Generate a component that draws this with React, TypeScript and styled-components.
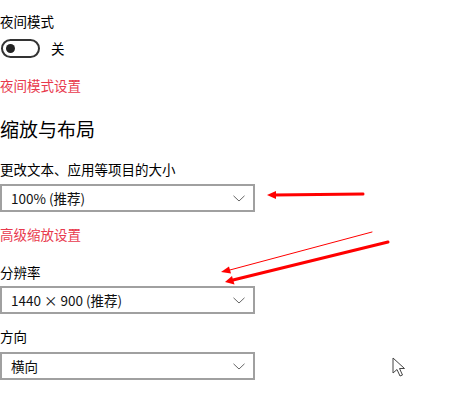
import styled, { createGlobalStyle } from "styled-components";

const GlobalStyle = createGlobalStyle`
  html, body {
    margin: 0;
    padding: 0;
    background: #ffffff;
  }
  body {
    font-family: "Noto Sans CJK SC", "Noto Sans", "Liberation Sans", sans-serif;
    color: #000;
  }
`;

const Page = styled.div`
  position: relative;
  width: 473px;
  height: 406px;
  overflow: hidden;
  display: flex;
  flex-direction: column;
  align-items: flex-start;
`;

const Label = styled.div<{ $top: number }>`
  margin-top: ${(p) => p.$top}px;
  font-size: 13.5px;
  line-height: 20px;
  height: 20px;
  color: #000;
  white-space: nowrap;
`;

const Link = styled(Label)`
  color: #e8394d;
`;

const Heading = styled.div<{ $top: number }>`
  margin-top: ${(p) => p.$top}px;
  font-size: 19px;
  line-height: 28px;
  height: 28px;
  color: #000;
  white-space: nowrap;
`;

const ToggleRow = styled.div<{ $top: number }>`
  margin-top: ${(p) => p.$top}px;
  display: flex;
  align-items: center;
  gap: 11px;
  height: 20px;
  padding-left: 1px;
`;

const Track = styled.div`
  box-sizing: border-box;
  width: 39px;
  height: 19px;
  border: 2px solid #333;
  border-radius: 10px;
  display: flex;
  align-items: center;
  padding-left: 3px;
`;

const Knob = styled.div`
  width: 9px;
  height: 9px;
  border-radius: 50%;
  background: #222;
`;

const StateText = styled.span`
  font-size: 13.5px;
  line-height: 20px;
  color: #000;
`;

const Select = styled.div<{ $top: number }>`
  margin-top: ${(p) => p.$top}px;
  box-sizing: border-box;
  width: 255px;
  height: 28px;
  border: 2px solid #a0a0a0;
  display: flex;
  align-items: center;
  justify-content: space-between;
  padding: 0 8px 0 9px;
  font-size: 13.5px;
  color: #111;
  white-space: nowrap;
`;

const Chevron = () => (
  <svg width="12" height="7" viewBox="0 0 12 7">
    <path d="M0.5 0.8 L6 6 L11.5 0.8" fill="none" stroke="#666" strokeWidth="1" />
  </svg>
);

const Overlay = styled.svg`
  position: absolute;
  left: 0;
  top: 0;
  pointer-events: none;
`;

const Annotations = () => (
  <Overlay width="473" height="406" viewBox="0 0 473 406">
    <g fill="#ff0000" stroke="#ff0000" strokeLinecap="round">
      <line x1="363" y1="194" x2="274" y2="195" strokeWidth="3" />
      <polygon points="267,195 276,191 276,199" stroke="none" />
      <line x1="372" y1="232" x2="228" y2="270.5" strokeWidth="1" />
      <polygon points="221,272 229,266.5 231,273.5" stroke="none" />
      <line x1="388" y1="242" x2="233" y2="280" strokeWidth="3" />
      <polygon points="225,282 232,276 234.5,284.5" stroke="none" />
    </g>
    <path
      d="M393 358 L393 373 L397 369.5 L400 376 L402.5 375 L399.5 368.5 L404.5 368.5 Z"
      fill="#fff"
      stroke="#444"
      strokeWidth="1"
      strokeLinejoin="round"
    />
  </Overlay>
);

export default function App() {
  return (
    <>
      <GlobalStyle />
      <Page>
        <Label $top={11}>夜间模式</Label>
        <ToggleRow $top={7}>
          <Track>
            <Knob />
          </Track>
          <StateText>关</StateText>
        </ToggleRow>
        <Link $top={17}>夜间模式设置</Link>
        <Heading $top={20}>缩放与布局</Heading>
        <Label $top={16}>更改文本、应用等项目的大小</Label>
        <Select $top={5}>
          <span>100% (推荐)</span>
          <Chevron />
        </Select>
        <Link $top={12}>高级缩放设置</Link>
        <Label $top={18}>分辨率</Label>
        <Select $top={4}>
          <span>1440 × 900 (推荐)</span>
          <Chevron />
        </Select>
        <Label $top={12}>方向</Label>
        <Select $top={6}>
          <span>横向</span>
          <Chevron />
        </Select>
        <Annotations />
      </Page>
    </>
  );
}
